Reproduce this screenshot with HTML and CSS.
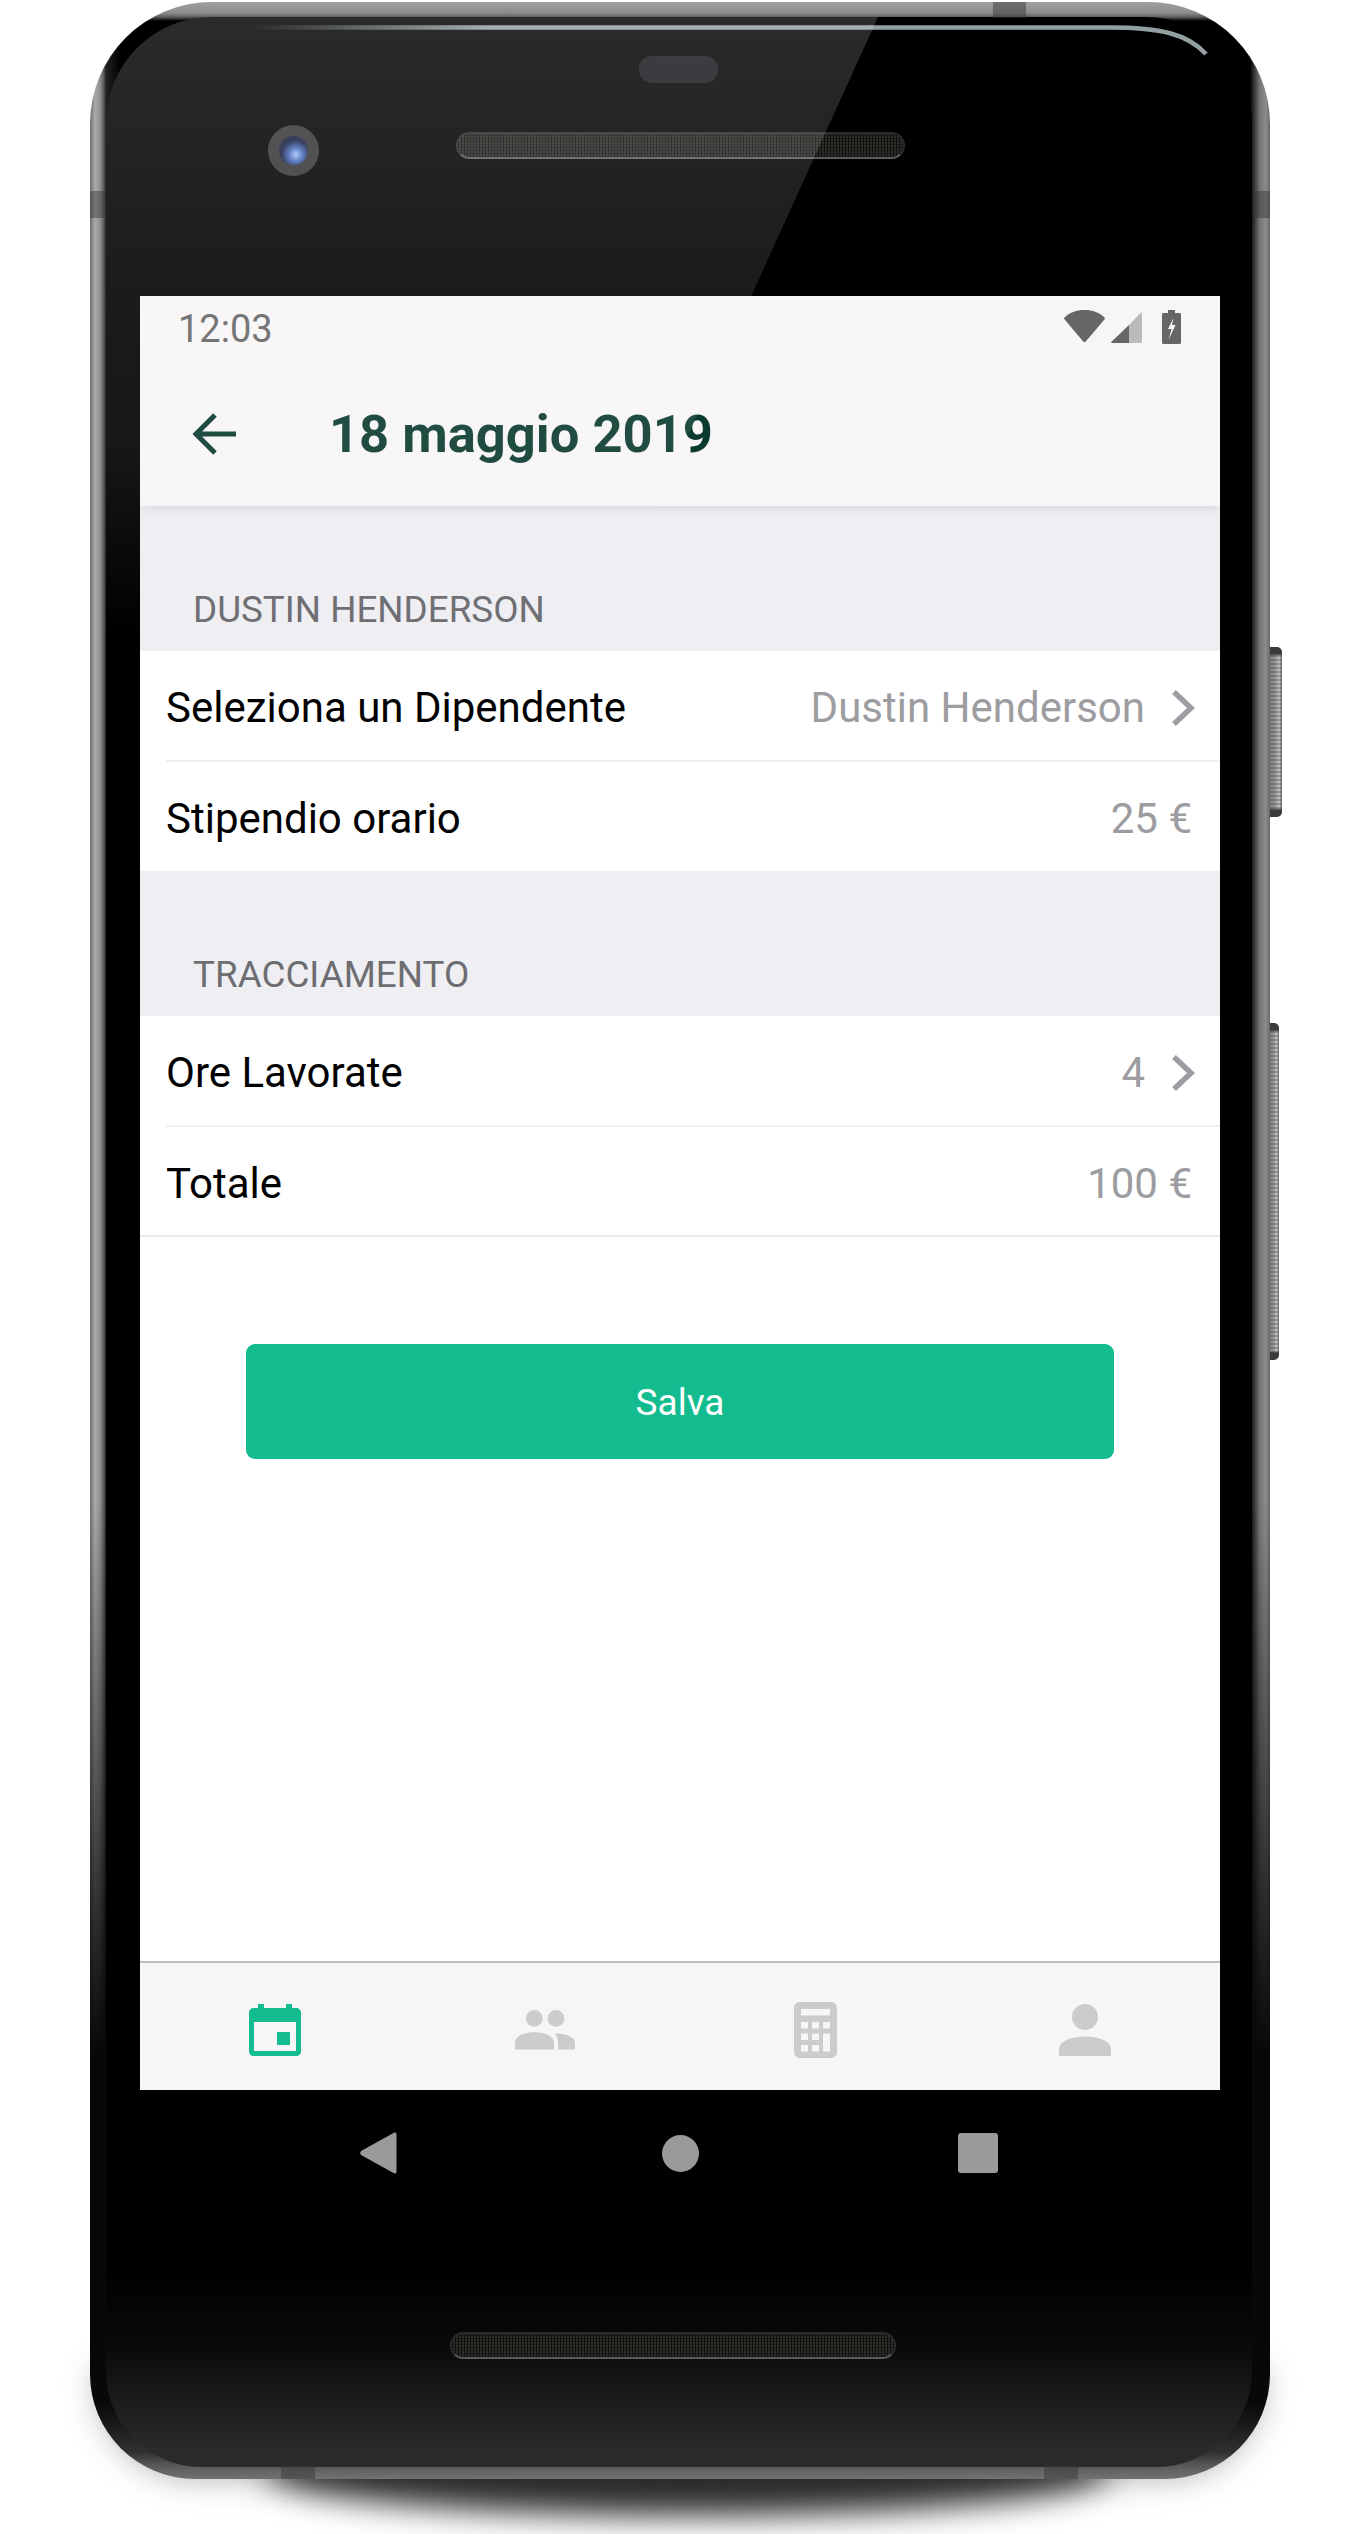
FILE: index.html
```html
<!DOCTYPE html>
<html lang="it">
<head>
  <meta charset="UTF-8">
  <title>18 maggio 2019</title>
  <link rel="stylesheet" href="styles.css">
</head>
<body>
  <div class="phone">
    <div class="floor-halo"></div>
    <div class="floor-shadow"></div>
    <div class="side-button power"></div>
    <div class="side-button volume"></div>

    <div class="shell">
      <div class="band band-top"></div>
      <div class="band band-left"></div>
      <div class="band band-right"></div>
      <div class="band band-bottom-left"></div>
      <div class="band band-bottom-right"></div>

      <div class="glass">
        <svg class="edge-light" width="1180" height="70" viewBox="0 0 1180 70">
          <defs>
            <linearGradient id="edgeFade" x1="160" x2="400" y1="0" y2="0" gradientUnits="userSpaceOnUse">
              <stop offset="0" stop-color="#93a0a2" stop-opacity="0"/>
              <stop offset="1" stop-color="#93a0a2"/>
            </linearGradient>
          </defs>
          <path d="M160 27.500 H1020 C1070 27.500 1098 34 1116 54" fill="none" stroke="url(#edgeFade)" stroke-width="4.500"/>
        </svg>

        <div class="top-bezel">
          <div class="camera"><div class="lens"></div></div>
          <div class="speaker"></div>
          <div class="sensor"></div>
        </div>

        <div class="screen">
          <header class="app-header">
            <div class="status-bar">
              <span class="clock">12:03</span>
              <div class="status-icons">
                <svg width="41" height="32" viewBox="0 0 41 32"><path d="M20.5 0C29 0 35.500 2.500 40.500 7.500C41 8 41 8.800 40.600 9.300L21.800 31.400C21 32.200 20 32.200 19.200 31.400L.4 9.300C0 8.800 0 8 .5 7.500C5.500 2.500 12 0 20.500 0Z" fill="#666"/></svg>
                <svg class="signal" width="31" height="32" viewBox="0 0 31 32"><path d="M18 13V31H1C.2 31 0 30.300 .5 29.700Z" fill="#666"/><path d="M18 13L29.500 1C30.300 .2 31 .5 31 1.500V29.500C31 30.500 30.500 31 29.500 31H18Z" fill="#bbb"/></svg>
                <svg class="battery" width="19" height="34" viewBox="0 0 19 34"><path d="M6 0H13V3H17.500C18.400 3 19 3.600 19 4.500V32.500C19 33.400 18.400 34 17.500 34H1.500C.6 34 0 33.400 0 32.500V4.500C0 3.600 .6 3 1.500 3H6Z" fill="#666"/><path d="M11.500 8L6 19H9.500L6.500 30L13.500 15H10Z" fill="#f7f5f6"/></svg>
              </div>
            </div>
            <div class="title-bar">
              <svg class="back" width="44" height="42" viewBox="0 0 44 42"><path d="M23 2L4 21L23 40M4 21H44" fill="none" stroke="#0a3a2e" stroke-width="5"/></svg>
              <h1>18 maggio 2019</h1>
            </div>
          </header>

          <main class="content">
            <h2 class="section-label">DUSTIN HENDERSON</h2>
            <div class="row">
              <span class="row-label">Seleziona un Dipendente</span>
              <span class="row-value">Dustin Henderson</span>
              <svg class="chevron" width="24" height="38" viewBox="0 0 24 38"><path d="M3 3L20 19L3 35" fill="none" stroke="#9c9ca1" stroke-width="5.500"/></svg>
            </div>
            <div class="row row-plain">
              <span class="row-label">Stipendio orario</span>
              <span class="row-value">25 €</span>
            </div>

            <h2 class="section-label">TRACCIAMENTO</h2>
            <div class="row">
              <span class="row-label">Ore Lavorate</span>
              <span class="row-value">4</span>
              <svg class="chevron" width="24" height="38" viewBox="0 0 24 38"><path d="M3 3L20 19L3 35" fill="none" stroke="#9c9ca1" stroke-width="5.500"/></svg>
            </div>
            <div class="row row-plain row-last">
              <span class="row-label">Totale</span>
              <span class="row-value">100 €</span>
            </div>

            <div class="actions">
              <button class="save-button" type="button">Salva</button>
            </div>
          </main>

          <nav class="tab-bar">
            <div class="tab">
              <svg width="52" height="52" viewBox="0 0 52 52"><path fill-rule="evenodd" d="M9 0H15V4H37V0H43V4H47C50 4 52 6 52 9V47C52 50 50 52 47 52H5C2 52 0 50 0 47V9C0 6 2 4 5 4H9ZM5 18V47H47V18Z" fill="#13bc8f"/><rect x="28" y="28" width="13" height="13" fill="#13bc8f"/></svg>
            </div>
            <div class="tab">
              <svg width="60" height="40" viewBox="0 0 60 40"><circle cx="19.300" cy="8.400" r="8.400" fill="#ccc"/><circle cx="41" cy="8.400" r="8.400" fill="#ccc"/><path d="M0 39.500V33C0 26 9 22.200 19.500 22.200S39 26 39 33V39.500Z" fill="#ccc"/><path d="M40 23.500C50 23.500 60 26 60 33V39.500H43V33C43 29 42 26 40 23.500Z" fill="#ccc"/></svg>
            </div>
            <div class="tab">
              <svg width="43" height="56" viewBox="0 0 43 56"><path fill-rule="evenodd" d="M6 0H37C40.500 0 43 2.500 43 6V50C43 53.500 40.500 56 37 56H6C2.500 56 0 53.500 0 50V6C0 2.500 2.500 0 6 0ZM7 7V13.500H36V7ZM7 20V26.500H14V20ZM18 20V26.500H25V20ZM29 20V26.500H36V20ZM7 31.500V38H14V31.500ZM18 31.500V38H25V31.500ZM29 31.500V49.500H36V31.500ZM7 43V49.500H14V43ZM18 43V49.500H25V43Z" fill="#ccc"/></svg>
            </div>
            <div class="tab">
              <svg width="52" height="52" viewBox="0 0 52 52"><circle cx="26" cy="13" r="13" fill="#ccc"/><path d="M0 52V45C0 37 13 32.500 26 32.500S52 37 52 45V52Z" fill="#ccc"/></svg>
            </div>
          </nav>
        </div>

        <div class="system-nav">
          <svg width="37" height="42" viewBox="0 0 37 42"><path d="M33.500 1C35 0 36.500 .5 36.500 2.500V39.500C36.500 41.500 35 42 33.500 41L1 23C0 22 0 20 1 19Z" fill="#9a9a9a"/></svg>
          <div class="nav-circle"></div>
          <div class="nav-square"></div>
        </div>

        <div class="bottom-bezel">
          <div class="speaker speaker-bottom"></div>
        </div>

        <div class="glare"></div>
      </div>
    </div>
  </div>
</body>
</html>
```

FILE: styles.css
```css
* {
  box-sizing: border-box;
}

html, body {
  margin: 0;
  background: #fff;
  font-family: Roboto, sans-serif;
}

body {
  height: 2534px;
  overflow: hidden;
}

/* phone body */
.phone {
  position: relative;
  width: 1180px;
  height: 2477px;
  margin: 2px 0 0 90px;
}

.floor-halo {
  position: absolute;
  left: 6px;
  right: 6px;
  bottom: 0;
  height: 110px;
  border-radius: 0 0 100px 100px;
  background: rgba(0, 0, 0, .3);
  filter: blur(16px);
}

.floor-shadow {
  position: absolute;
  left: 175px;
  right: 160px;
  bottom: -36px;
  height: 90px;
  border-radius: 50%;
  background: #2a2a2a;
  filter: blur(16px);
}

.side-button {
  position: absolute;
  right: -12px;
  width: 14px;
  border-radius: 0 5px 5px 0;
  background:
    linear-gradient(180deg, #3a3a3a 0, #3a3a3a 7px, transparent 9px, transparent calc(100% - 9px), #3a3a3a calc(100% - 7px)),
    repeating-linear-gradient(180deg, rgba(0,0,0,.18) 0 2px, transparent 2px 4px),
    linear-gradient(90deg, #7a7a7a, #999 55%, #c4c4c4 80%, #666);
}

.power {
  top: 645px;
  height: 170px;
}

.volume {
  top: 1021px;
  height: 337px;
  right: -9px;
  width: 11px;
}

.shell {
  position: relative;
  height: 100%;
  padding: 15px 18px 12px 16px;
  border-radius: 122px 122px 105px 105px;
  background:
    linear-gradient(180deg, #a0a0a0 0, #8c8c8c 11px, #5e5e5e 15px, transparent 19px, transparent 1500px, #080808 2050px, #080808 2400px, #303030 2450px, #5a5a5a 2464px, #727272 2477px),
    linear-gradient(90deg, #6e6e6e 0, #aaa 5px, #909090 10px, #555 14px, #222 16px, #000 30px, #000 1160px, #333 1164px, #777 1170px, #8c8c8c 1176px, #666 1180px);
  overflow: hidden;
}

.band {
  position: absolute;
  background: rgba(50, 50, 50, .45);
  z-index: 1;
}

.band-top {
  top: 0;
  left: 903px;
  width: 33px;
  height: 16px;
}

.band-left {
  top: 189px;
  left: 0;
  width: 15px;
  height: 27px;
}

.band-right {
  top: 189px;
  right: 0;
  width: 17px;
  height: 27px;
}

.band-bottom-left {
  bottom: 0;
  left: 191px;
  width: 34px;
  height: 14px;
}

.band-bottom-right {
  bottom: 0;
  left: 954px;
  width: 34px;
  height: 14px;
}

.glass {
  position: relative;
  height: 100%;
  padding-left: 34px;
  padding-right: 32px;
  border-radius: 106px 106px 96px 96px;
  background: linear-gradient(180deg, #000 2250px, #0a0a0a 2330px, #2a2a2a 2430px);
  overflow: hidden;
}

.edge-light {
  position: absolute;
  top: -17px;
  left: -16px;
}

.glare {
  position: absolute;
  inset: 0;
  background: linear-gradient(180deg, rgba(255,255,255,.17), rgba(255,255,255,.105) 280px, rgba(255,255,255,.09) 430px, rgba(255,255,255,0) 620px);
  clip-path: polygon(0 0, 772px 0, 272px 1100px, 0 1100px);
  pointer-events: none;
}

/* top bezel */
.top-bezel {
  position: relative;
  display: flex;
  align-items: center;
  height: 279px;
  padding: 0 0 22px 128px;
}

.camera {
  display: flex;
  align-items: center;
  justify-content: center;
  width: 51px;
  height: 51px;
  margin-top: 9px;
  border-radius: 50%;
  background: #363638;
}

.lens {
  width: 29px;
  height: 29px;
  border-radius: 50%;
  background: radial-gradient(circle at 58% 64%, #a8c4f4 0, #4c6fc0 26%, #1a2448 55%, #11152a 100%);
}

.speaker {
  width: 449px;
  height: 27px;
  margin-left: 137px;
  border-radius: 14px;
  border: 2px solid #2b2b2b;
  border-bottom-color: #5c5c5c;
  background:
    repeating-linear-gradient(90deg, rgba(0,0,0,.6) 0 1px, transparent 1px 3px),
    repeating-linear-gradient(0deg, rgba(0,0,0,.35) 0 1px, transparent 1px 3px),
    #2d2c29;
}

.sensor {
  position: absolute;
  left: 499px;
  top: 39px;
  width: 79px;
  height: 27px;
  border-radius: 13px;
  background: #17181c;
}

/* app screen */
.screen {
  display: flex;
  flex-direction: column;
  width: 1080px;
  height: 1794px;
  background: #fff;
}

.app-header {
  position: relative;
  height: 210px;
  background: #f7f5f6;
  box-shadow: 0 3px 10px rgba(0, 0, 0, .09);
}

.status-bar {
  display: flex;
  align-items: flex-start;
  justify-content: space-between;
  height: 66px;
  padding: 0 39px 0 38px;
}

.clock {
  margin-top: 11px;
  color: #666;
  font-size: 38px;
}

.status-icons {
  display: flex;
  align-items: flex-start;
  padding-top: 14px;
}

.signal {
  margin: 2px 0 0 6px;
}

.battery {
  margin-left: 20px;
}

.title-bar {
  display: flex;
  align-items: center;
  height: 144px;
  padding-left: 52px;
}

.back {
  flex: none;
}

.title-bar h1 {
  margin: 0 0 0 93px;
  color: #0a3a2e;
  font-size: 52.500px;
  font-weight: 700;
}

.content {
  flex: 1;
}

.section-label {
  height: 145px;
  margin: 0;
  padding: 82px 0 0 53px;
  background: #eeeef3;
  color: #6d6d72;
  font-size: 36.800px;
  font-weight: 400;
  line-height: 44px;
}

.row {
  display: flex;
  align-items: center;
  height: 111px;
  margin-left: 26px;
  padding-top: 4px;
  padding-right: 25px;
  border-bottom: 2px solid #f0f0f0;
}

.row-plain {
  height: 109px;
  padding-right: 28px;
  border-bottom: none;
}

.row-last {
  height: 110px;
  margin-left: 0;
  padding-left: 26px;
  border-bottom: 2px solid #e9e9e9;
}

.row-label {
  flex: 1;
  color: #000;
  font-size: 42px;
}

.row-value {
  color: #9c9ca1;
  font-size: 42px;
}

.chevron {
  margin-left: 26px;
}

.actions {
  display: flex;
  justify-content: center;
  padding-top: 107px;
}

.save-button {
  width: 868px;
  height: 115px;
  padding-top: 3px;
  border: none;
  border-radius: 9px;
  background: #13bc8f;
  color: #fff;
  font-family: inherit;
  font-size: 37px;
}

.tab-bar {
  display: grid;
  grid-template-columns: repeat(4, 270px);
  height: 129px;
  border-top: 2px solid #bdbdbd;
  background: #f7f5f6;
}

.tab {
  display: flex;
  align-items: center;
  justify-content: center;
  padding-top: 7px;
}

/* android buttons */
.system-nav {
  display: flex;
  align-items: center;
  justify-content: space-between;
  height: 126px;
  padding: 0 222px 0 220px;
}

.nav-circle {
  width: 37px;
  height: 37px;
  margin-left: 5px;
  border-radius: 50%;
  background: #9a9a9a;
}

.nav-square {
  width: 40px;
  height: 40px;
  border-radius: 3px;
  background: #9a9a9a;
}

.bottom-bezel {
  padding-top: 116px;
}

.speaker-bottom {
  width: 446px;
  height: 27px;
  margin-left: 310px;
}
```
